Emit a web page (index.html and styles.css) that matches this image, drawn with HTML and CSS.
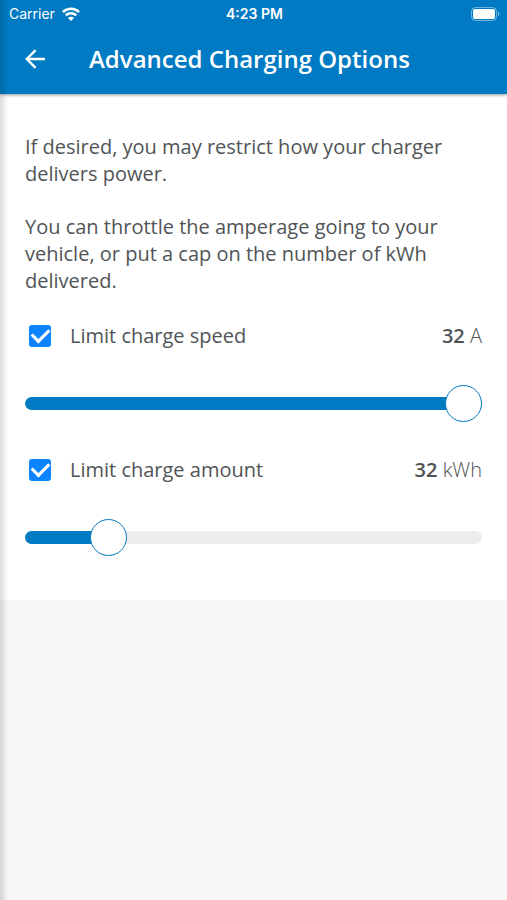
FILE: index.html
```html
<!DOCTYPE html>
<html lang="en">
  <head>
    <meta charset="UTF-8" />
    <meta name="viewport" content="width=device-width, initial-scale=1.0" />
    <title>Advanced Charging Options</title>
    <link rel="stylesheet" href="styles.css">
  </head>
  <body>
    <header class="header">
      <div class="status-bar">
        <div class="carrier">
          <span>Carrier</span>
          <svg class="wifi" viewBox="0 0 18 14" width="18" height="14" aria-hidden="true">
            <path d="M0.9 5 A11.6 11.6 0 0 1 17.1 5" />
            <path d="M3.8 8.3 A7.4 7.4 0 0 1 14.2 8.3" />
            <path class="wifi-dot" d="M9 14 L6 11 A4.2 4.2 0 0 1 12 11 Z" />
          </svg>
        </div>
        <span class="time">4:23 PM</span>
        <svg class="battery" viewBox="0 0 29 14" width="29" height="14" aria-hidden="true">
          <rect class="battery-shell" x="0.5" y="0.5" width="25" height="13" rx="4" />
          <rect x="2" y="2" width="22" height="10" rx="2" />
          <path class="battery-tip" d="M27 4.8 A2.4 2.4 0 0 1 27 9.2 Z" />
        </svg>
      </div>
      <div class="title-bar">
        <button type="button" class="back" aria-label="Back">
          <svg viewBox="0 0 20 20" width="20" height="20" aria-hidden="true">
            <path d="M20 10 H2 M10.6 1.2 L1.8 10 L10.6 18.8" />
          </svg>
        </button>
        <h1>Advanced Charging Options</h1>
      </div>
    </header>

    <main class="content">
      <p>If desired, you may restrict how your charger delivers power.</p>
      <p>You can throttle the amperage going to your vehicle, or put a cap on the number of kWh delivered.</p>

      <section class="option">
        <div class="option-row">
          <input type="checkbox" id="limitSpeed" checked />
          <label for="limitSpeed">Limit charge speed</label>
          <output for="speed"><b id="speedValue">32</b> A</output>
        </div>
        <input type="range" id="speed" aria-label="Charge speed" min="0" max="32" value="32" style="--fill: 100%" />
      </section>

      <section class="option">
        <div class="option-row">
          <input type="checkbox" id="limitAmount" checked />
          <label for="limitAmount">Limit charge amount</label>
          <output for="amount"><b id="amountValue">32</b> kWh</output>
        </div>
        <input type="range" id="amount" aria-label="Charge amount" min="0" max="208" value="32" style="--fill: 15%" />
      </section>
    </main>

    <script>
      function bindSlider(id) {
        let slider = document.getElementById(id);
        slider.addEventListener("input", () => {
          document.getElementById(id + "Value").innerText = slider.value;
          slider.style.setProperty("--fill", (slider.value / slider.max) * 100 + "%");
        });
      }

      bindSlider("speed");
      bindSlider("amount");
    </script>
  </body>
</html>
```

FILE: styles.css
```css
* {
  box-sizing: border-box;
}

body {
  margin: 0;
  min-height: 100vh;
  background: #f7f7f7;
  color: #505456;
  font-family: "Open Sans", sans-serif;
  font-size: 20px;
  line-height: 27px;
}

/* shadow along the left edge of the screen */
body::before {
  content: "";
  position: fixed;
  top: 0;
  bottom: 0;
  left: 0;
  width: 8px;
  background: linear-gradient(to right, rgba(0, 0, 0, 0.14), rgba(0, 0, 0, 0));
  pointer-events: none;
  z-index: 2;
}

.header {
  position: relative;
  background: #007ac2;
  color: white;
  box-shadow: 0 1px 3px rgba(0, 0, 0, 0.4);
}

.status-bar {
  display: grid;
  grid-template-columns: 1fr auto 1fr;
  align-items: center;
  height: 27px;
  padding: 0 7px 0 9px;
  font-family: Inter, sans-serif;
  font-size: 14px;
  line-height: 18px;
}

.carrier {
  display: flex;
  align-items: center;
  gap: 7px;
}

.time {
  font-weight: 600;
}

.wifi {
  fill: none;
  stroke: white;
  stroke-width: 2.5;
}

.wifi-dot {
  fill: white;
  stroke: none;
}

.battery {
  justify-self: end;
  fill: white;
}

.battery-shell {
  fill: none;
  stroke: rgba(255, 255, 255, 0.45);
}

.battery-tip {
  fill: rgba(255, 255, 255, 0.5);
}

.title-bar {
  display: flex;
  align-items: center;
  gap: 44px;
  height: 67px;
  padding: 0 25px 3px;
}

.back {
  display: flex;
  padding: 0;
  border: none;
  background: none;
  cursor: pointer;
}

.back svg {
  fill: none;
  stroke: white;
  stroke-width: 2.4;
}

h1 {
  margin: 0;
  font-size: 24px;
  font-weight: 600;
  line-height: 32px;
}

.content {
  padding: 39px 25px 44px;
  background: white;
}

p {
  margin: 0 0 26px;
}

p + .option {
  margin-top: 28px;
}

.option + .option {
  margin-top: 34px;
}

.option-row {
  display: flex;
  align-items: center;
  margin-bottom: 36px;
}

.option-row label {
  flex: 1;
  margin-left: 19px;
}

output {
  font-weight: 300;
}

output b {
  font-weight: 600;
}

input[type="checkbox"] {
  appearance: none;
  width: 22px;
  height: 22px;
  margin: 0 0 0 4px;
  border: 2px solid #0a84ff;
  border-radius: 3px;
  cursor: pointer;
}

input[type="checkbox"]:checked {
  display: grid;
  place-items: center;
  background: #0a84ff;
}

input[type="checkbox"]:checked::before {
  content: "";
  width: 14px;
  height: 8px;
  margin-bottom: 5px;
  border: solid white;
  border-width: 0 0 3px 3px;
  transform: rotate(-45deg);
}

input[type="range"] {
  appearance: none;
  display: block;
  width: 100%;
  height: 37px;
  margin: 0;
  background: none;
  cursor: pointer;
}

input[type="range"]::-webkit-slider-runnable-track {
  height: 13px;
  border-radius: 7px;
  background: linear-gradient(to right, #007ac2 var(--fill), #eceeee var(--fill));
}

input[type="range"]::-webkit-slider-thumb {
  appearance: none;
  width: 37px;
  height: 37px;
  margin-top: -12px;
  border: 1px solid #007ac2;
  border-radius: 50%;
  background: white;
}
```
